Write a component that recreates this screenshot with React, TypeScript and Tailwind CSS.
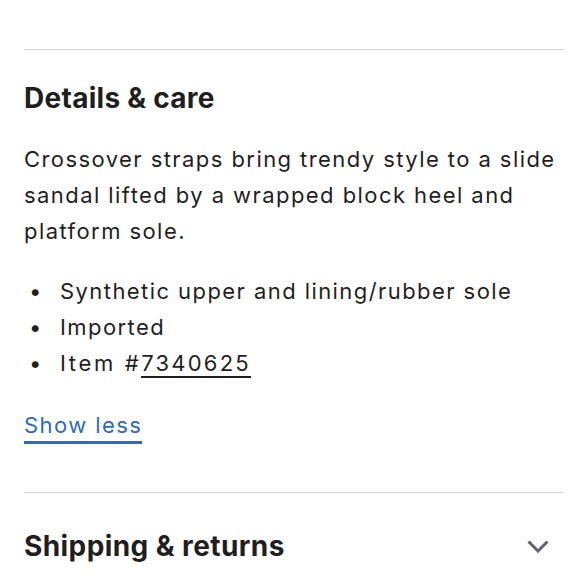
const bullets = ['Synthetic upper and lining/rubber sole', 'Imported'];

function Chevron() {
  return (
    <svg width="22" height="13" viewBox="0 0 22 13" fill="none" className="mr-[15px]">
      <polyline points="1.5,1.5 11,11 20.5,1.5" stroke="#5f6569" strokeWidth="3" />
    </svg>
  );
}

export default function App() {
  return (
    <main className="w-[580px] h-[580px] overflow-hidden bg-white pl-6 pr-4 text-[#1f1f1f] font-['Inter','Liberation_Sans',sans-serif]">
      <div className="h-[49px]" />

      {/* Details & care */}
      <section className="border-t border-[#d3d3d3]">
        <h2 className="pt-[30px] text-[28px] leading-[36px] font-bold tracking-[0.01em]">Details &amp; care</h2>

        <p className="mt-[25px] text-[22px] leading-[36px] tracking-[0.065em]">
          Crossover straps bring trendy style to a slide sandal lifted by a wrapped block heel and platform sole.
        </p>

        <ul className="mt-6 text-[22px] leading-[36px] tracking-[0.065em]">
          {bullets.map((b) => (
            <li key={b} className="flex items-start gap-3">
              <span className="w-6 text-center">•</span>
              <span>{b}</span>
            </li>
          ))}
          <li className="flex items-start gap-3">
            <span className="w-6 text-center">•</span>
            <span>
              <span className="tracking-[0.12em]">Item #</span>
              <span className="border-b-2 border-[#1f1f1f] tracking-[0.1em]">7340625</span>
            </span>
          </li>
        </ul>

        <button className="mt-[28px] text-[22px] leading-[32px] text-[#2a6bc6] border-b-[3px] border-[#2a6bc6] tracking-[0.065em]">
          Show less
        </button>
      </section>

      {/* Shipping & returns */}
      <section className="mt-[48px] border-t border-[#d3d3d3]">
        <div className="flex items-center justify-between pt-[35px]">
          <h2 className="text-[28px] leading-[36px] font-bold tracking-[0.015em]">Shipping &amp; returns</h2>
          <Chevron />
        </div>
      </section>
    </main>
  );
}
